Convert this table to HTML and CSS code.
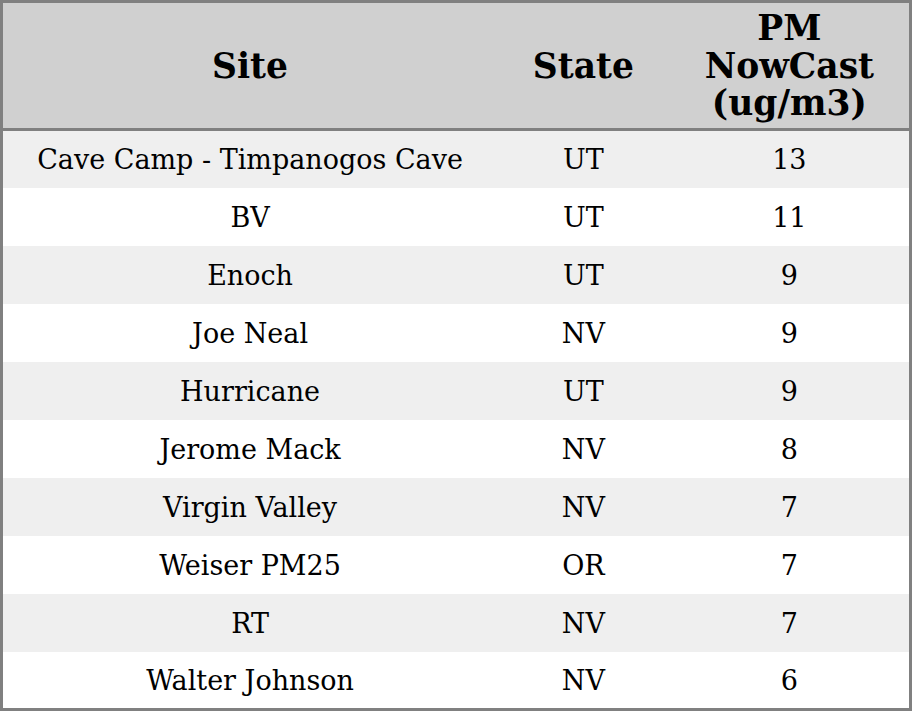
FILE: index.html
```html
<!DOCTYPE html>
<html>
<head>
<meta charset="utf-8">
<link rel="stylesheet" href="styles.css">
</head>
<body>
<table class="aq-table">
  <colgroup>
    <col class="col-site">
    <col class="col-state">
    <col class="col-pm">
  </colgroup>
  <thead>
    <tr class="head-row">
      <th>Site</th>
      <th>State</th>
      <th>PM<br>NowCast<br>(ug/m3)</th>
    </tr>
  </thead>
  <tbody>
    <tr class="odd"><td>Cave Camp - Timpanogos Cave</td><td>UT</td><td>13</td></tr>
    <tr><td>BV</td><td>UT</td><td>11</td></tr>
    <tr class="odd"><td>Enoch</td><td>UT</td><td>9</td></tr>
    <tr><td>Joe Neal</td><td>NV</td><td>9</td></tr>
    <tr class="odd"><td>Hurricane</td><td>UT</td><td>9</td></tr>
    <tr><td>Jerome Mack</td><td>NV</td><td>8</td></tr>
    <tr class="odd"><td>Virgin Valley</td><td>NV</td><td>7</td></tr>
    <tr><td>Weiser PM25</td><td>OR</td><td>7</td></tr>
    <tr class="odd"><td>RT</td><td>NV</td><td>7</td></tr>
    <tr><td>Walter Johnson</td><td>NV</td><td>6</td></tr>
  </tbody>
</table>
</body>
</html>
```
FILE: styles.css
```css
html, body {
  margin: 0;
  padding: 0;
  background: #ffffff;
}
.aq-table {
  width: 912px;
  height: 711px;
  border-collapse: collapse;
  table-layout: fixed;
  border: 3px solid #808080;
  font-family: "DejaVu Serif", serif;
  color: #000;
}
.col-site { width: 494px; }
.col-state { width: 172px; }
.col-pm { width: 240px; }
.aq-table th {
  background: #d0d0d0;
  font-size: 34.5px;
  font-weight: bold;
  line-height: 37.5px;
  padding: 2px 0 0;
  text-align: center;
  vertical-align: middle;
  border-bottom: 3px solid #808080;
}
.head-row { height: 128px; }
.aq-table td {
  font-size: 27px;
  line-height: 30px;
  padding: 2px 0 0;
  text-align: center;
  vertical-align: middle;
}
.aq-table tbody tr { height: 57px; background: #ffffff; }
.aq-table tbody tr.odd { background: #efefef; }
```
